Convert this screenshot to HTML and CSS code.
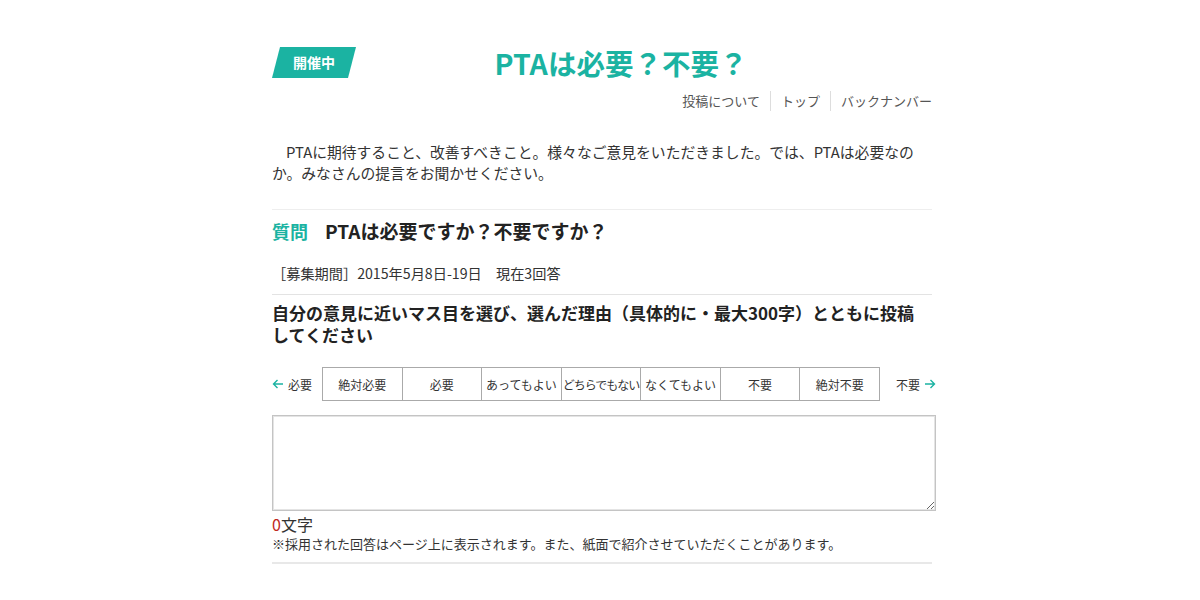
FILE: index.html
```html
<!DOCTYPE html>
<html lang="ja">

<head>
    <meta charset="utf-8">
    <title>PTAは必要？不要？</title>
    <link rel="stylesheet" href="styles.css">
</head>

<body>
    <div id="page">
        <div id="header">
            <div class="badge">開催中</div>
            <h1 class="title">PTAは必要？不要？</h1>
        </div>
        <ul id="nav">
            <li><a href="#">投稿について</a></li>
            <li><a href="#">トップ</a></li>
            <li><a href="#">バックナンバー</a></li>
        </ul>

        <p class="intro">PTAに期待すること、改善すべきこと。様々なご意見をいただきました。では、PTAは必要なのか。みなさんの提言をお聞かせください。</p>

        <div class="question">
            <span class="questionLabel">質問</span>
            <span class="questionText">PTAは必要ですか？不要ですか？</span>
        </div>
        <p class="meta">［募集期間］2015年5月8日-19日　現在3回答</p>

        <h2 class="formTitle">自分の意見に近いマス目を選び、選んだ理由（具体的に・最大300字）とともに投稿してください</h2>

        <div class="scale">
            <div class="scaleEnd scaleLeft">
                <svg width="12" height="12" viewBox="0 0 12 12"><path d="M11 6H1.5M5.5 2L1.5 6l4 4" fill="none" stroke="#1bb3a2" stroke-width="1.4"/></svg>
                <span>必要</span>
            </div>
            <table class="scaleTable">
                <tr>
                    <td>絶対必要</td>
                    <td>必要</td>
                    <td>あってもよい</td>
                    <td class="tight">どちらでもない</td>
                    <td>なくてもよい</td>
                    <td>不要</td>
                    <td>絶対不要</td>
                </tr>
            </table>
            <div class="scaleEnd scaleRight">
                <span>不要</span>
                <svg width="12" height="12" viewBox="0 0 12 12"><path d="M1 6h9.5M6.5 2l4 4-4 4" fill="none" stroke="#1bb3a2" stroke-width="1.4"/></svg>
            </div>
        </div>

        <textarea class="answer"></textarea>
        <p class="counter"><span class="count">0</span>文字</p>
        <p class="note">※採用された回答はページ上に表示されます。また、紙面で紹介させていただくことがあります。</p>
        <div class="rule"></div>
    </div>
</body>

</html>
```

FILE: styles.css
```css
body {
    margin: 0;
    background-color: #fff;
    color: #222;
    font-family: "Noto Sans CJK JP", "Noto Sans", sans-serif;
}

#page {
    width: 664px;
    margin: 0 auto;
    padding-left: 8px;
}

#header {
    display: flex;
    align-items: center;
    margin-top: 47px;
}

.badge {
    width: 84px;
    height: 31px;
    line-height: 31px;
    background-color: #1bb3a2;
    color: #fff;
    font-size: 14px;
    font-weight: bold;
    text-align: center;
    clip-path: polygon(8px 0, 100% 0, 76px 100%, 0 100%);
}

.title {
    flex: 1;
    margin: 0;
    padding-right: 50px;
    text-align: center;
    font-size: 28.5px;
    line-height: 31px;
    color: #1bb3a2;
}

#nav {
    display: flex;
    justify-content: flex-end;
    list-style: none;
    margin: 13px 4px 0 0;
    padding: 0;
    font-size: 13px;
    line-height: 20px;
}

#nav li + li {
    border-left: 1px solid #ddd;
    margin-left: 10px;
    padding-left: 10px;
}

#nav a {
    color: #555;
    text-decoration: none;
}

.intro {
    margin: 30px 4px 0 0;
    padding: 0 8px 26px 0;
    border-bottom: 1px solid #eee;
    text-indent: 14px;
    font-size: 14.8px;
    line-height: 21px;
    color: #333;
}

.question {
    display: flex;
    align-items: center;
    padding-top: 8px;
    line-height: 26px;
    font-weight: bold;
}

.questionLabel {
    color: #1bb3a2;
    font-size: 18px;
    margin-right: 17px;
}

.questionText {
    font-size: 19px;
    color: #222;
}

.meta {
    margin: 19px 4px 0 0;
    padding-bottom: 11px;
    border-bottom: 1px solid #e3e3e3;
    font-size: 14.2px;
    line-height: 20px;
    color: #333;
}

.formTitle {
    margin: 7px 12px 0 0;
    font-size: 17px;
    line-height: 22px;
    color: #222;
}

.scale {
    display: flex;
    align-items: center;
    margin-top: 21px;
    font-size: 12px;
    color: #333;
}

.scaleEnd {
    display: flex;
    align-items: center;
    gap: 4px;
}

.scaleLeft {
    width: 50px;
}

.scaleRight {
    width: 56px;
    justify-content: flex-end;
}

.scaleTable {
    width: 558px;
    height: 34px;
    border-collapse: collapse;
    table-layout: fixed;
}

.scaleTable td {
    border: 1px solid #aaa;
    text-align: center;
    white-space: nowrap;
    overflow: hidden;
    padding: 0;
    cursor: pointer;
}

.scaleTable td.tight {
    letter-spacing: -1px;
}

.answer {
    display: block;
    box-sizing: border-box;
    width: 664px;
    height: 96px;
    margin: 14px 0 0;
    border: 1px solid #c4c4c4;
    box-shadow: inset 0 0 0 1px #e4e4e4;
    font-family: inherit;
}

.counter {
    margin: 3px 0 0;
    font-size: 16px;
    line-height: 20px;
    color: #333;
}

.count {
    color: #c0281e;
}

.note {
    margin: 1px 0 0;
    font-size: 13px;
    line-height: 18px;
    color: #333;
}

.rule {
    margin: 9px 4px 0 0;
    border-top: 2px solid #e8e8e8;
}
```
